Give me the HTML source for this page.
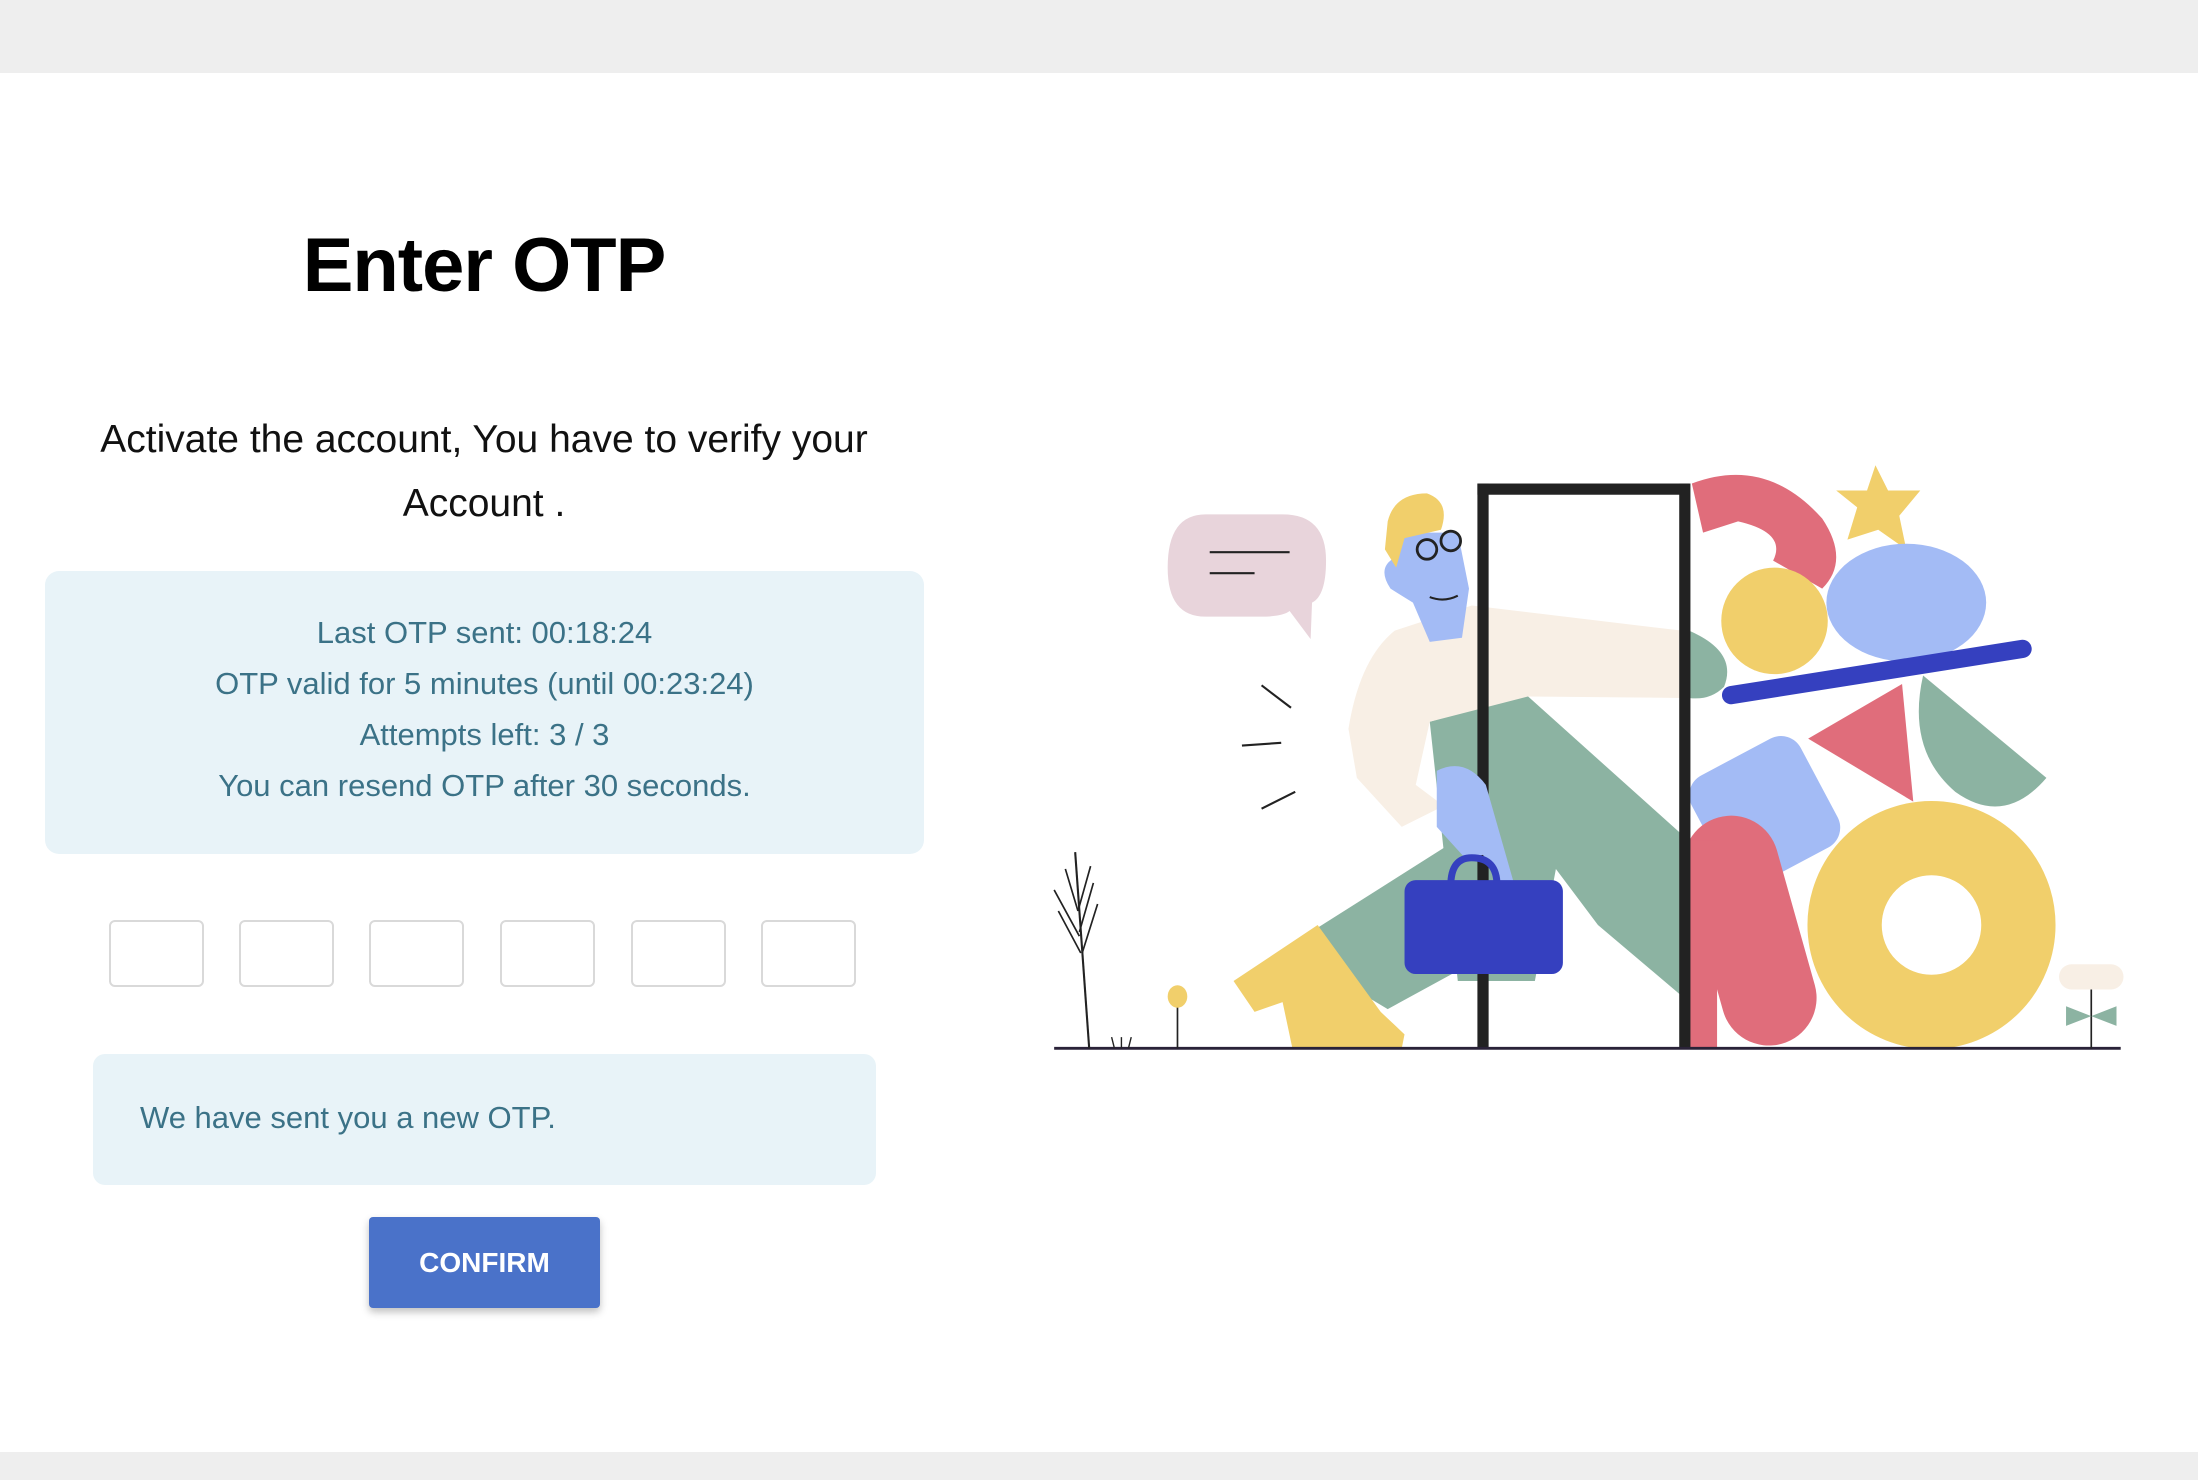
<!DOCTYPE html>
<html><head><meta charset="utf-8">
<style>
html,body{margin:0;padding:0;}
body{width:2198px;height:1480px;position:relative;background:#fff;font-family:"Liberation Sans",Roboto,sans-serif;overflow:hidden;}
.topbar{position:absolute;left:0;top:0;width:2198px;height:73px;background:#eeeeee;}
.botbar{position:absolute;left:0;top:1452px;width:2198px;height:28px;background:#eeeeee;}
h1{position:absolute;left:0;width:968px;top:222px;margin:0;text-align:center;font-size:76px;font-weight:bold;color:#000;letter-spacing:-1px;}
.para{position:absolute;left:60px;width:848px;top:408px;text-align:center;font-size:39px;line-height:64px;color:#111;}
.info{position:absolute;left:45px;top:571px;width:879px;height:283px;background:#e8f3f8;border-radius:14px;text-align:center;color:#3b7287;font-size:31px;}
.info div{position:absolute;left:0;width:100%;}
.otp{position:absolute;top:920px;width:95px;height:67px;border:2px solid #d9d9d9;border-radius:6px;box-sizing:border-box;}
.alert{position:absolute;left:93px;top:1054px;width:783px;height:131px;background:#e8f3f8;border-radius:12px;color:#3b7287;font-size:31px;}
.alert span{position:absolute;left:47px;top:46px;}
.btn{position:absolute;left:369px;top:1217px;width:231px;height:91px;background:#4a72c9;border-radius:4px;color:#fff;font-size:28px;font-weight:bold;text-align:center;line-height:91px;box-shadow:0 4px 8px rgba(0,0,0,0.25);}
svg{position:absolute;left:0;top:0;}
</style></head><body>
<div class="topbar"></div>
<div class="botbar"></div>
<h1>Enter OTP</h1>
<div class="para">Activate the account, You have to verify your Account .</div>
<div class="info">
<div style="top:44px">Last OTP sent: 00:18:24</div>
<div style="top:95px">OTP valid for 5 minutes (until 00:23:24)</div>
<div style="top:146px">Attempts left: 3 / 3</div>
<div style="top:197px">You can resend OTP after 30 seconds.</div>
</div>
<div class="otp" style="left:109px"></div>
<div class="otp" style="left:239px"></div>
<div class="otp" style="left:369px"></div>
<div class="otp" style="left:500px"></div>
<div class="otp" style="left:631px"></div>
<div class="otp" style="left:761px"></div>
<div class="alert"><span>We have sent you a new OTP.</span></div>
<div class="btn">CONFIRM</div>

<svg width="2198" height="1480" viewBox="0 0 1568 1056">
<path d="M860 367 H915 Q946 367 946 400 Q946 425 936 430 L935 456 L920 436 Q915 440 900 440 H860 Q833 440 833 405 Q833 367 860 367Z" fill="#e8d4db"/>
<line x1="863" y1="394" x2="920" y2="394" stroke="#222" stroke-width="1.5"/>
<line x1="863" y1="409" x2="895" y2="409" stroke="#222" stroke-width="1.5"/>
<line x1="900" y1="489" x2="921" y2="505" stroke="#222" stroke-width="1.5"/>
<line x1="886" y1="532" x2="914" y2="530" stroke="#222" stroke-width="1.5"/>
<line x1="900" y1="577" x2="924" y2="565" stroke="#222" stroke-width="1.5"/>
<path d="M1207 345 Q1260 325 1300 370 Q1320 400 1300 420 L1265 400 Q1275 380 1240 372 L1215 380Z" fill="#e06d7b"/>
<path d="M1338 332 L1347 350 L1370 350 L1355 368 L1360 392 L1340 378 L1318 385 L1325 362 L1310 350 L1332 350Z" fill="#f1cf6b"/>
<circle cx="1266" cy="443" r="38" fill="#f1cf6b"/>
<ellipse cx="1360" cy="430" rx="57" ry="42" fill="#a3bbf5"/>
<path d="M1372 482 L1460 555 Q1430 590 1395 565 Q1360 535 1372 482Z" fill="#8cb3a2"/>
<path d="M1290 527 L1357 488 L1365 572Z" fill="#e06d7b"/>
<rect x="1215" y="535" width="88" height="88" rx="16" fill="#a3bbf5" transform="rotate(-28 1259 579)"/>
<line x1="1235" y1="616" x2="1262" y2="712" stroke="#e06d7b" stroke-width="68" stroke-linecap="round"/>
<rect x="1205" y="600" width="20" height="148" fill="#e06d7b"/>
<circle cx="1378" cy="660" r="62" fill="none" stroke="#f1cf6b" stroke-width="53"/>
<path d="M1205 450 Q1240 465 1230 490 Q1220 500 1205 498Z" fill="#8cb3a2"/>
<line x1="1235" y1="496" x2="1443" y2="463" stroke="#3540bf" stroke-width="13" stroke-linecap="round"/>
<path d="M1020 515 L1088 495 L1205 600 L1205 715 L1140 660 L1110 620 L1095 700 L1040 700 Z" fill="#8cb3a2"/>
<path d="M940 662 L1030 605 L1045 690 L990 720 L965 705Z" fill="#8cb3a2"/>
<path d="M880 700 L940 660 L985 722 L1002 738 L1000 748 L922 748 L915 715 L895 722Z" fill="#f1cf6b"/>
<path d="M995 450 L1050 432 L1200 450 L1200 498 L1090 497 L1020 515 L1010 560 L1030 575 L1000 590 L968 555 L962 520 Q970 470 995 450Z" fill="#f8efe5"/>
<rect x="1054" y="345" width="151" height="8" fill="#222"/>
<rect x="1054" y="345" width="8" height="403" fill="#222"/>
<rect x="1198" y="345" width="8" height="403" fill="#222"/>
<path d="M1000 380 L1040 380 L1048 420 L1043 455 L1020 458 L1008 430 L992 420 Q982 405 995 398Z" fill="#a3bbf5"/>
<path d="M990 372 Q995 352 1018 352 Q1035 358 1028 378 L1002 384 L996 405 L988 392Z" fill="#f1cf6b"/>
<circle cx="1018" cy="392" r="7" fill="none" stroke="#222" stroke-width="2"/>
<circle cx="1035" cy="386" r="7" fill="none" stroke="#222" stroke-width="2"/>
<path d="M1020 426 Q1030 430 1040 425" stroke="#222" stroke-width="1.5" fill="none"/>
<path d="M1025 550 Q1045 540 1060 560 L1080 630 L1070 630 L1058 610 L1045 612 L1025 590Z" fill="#a3bbf5"/>
<path d="M1035 632 Q1035 612 1050 612 Q1068 612 1068 632" stroke="#3540bf" stroke-width="5" fill="none"/>
<rect x="1002" y="628" width="113" height="67" rx="8" fill="#3540bf"/>
<line x1="752" y1="748" x2="1513" y2="748" stroke="#2a2238" stroke-width="2"/>
<line x1="767" y1="608" x2="777" y2="748" stroke="#222" stroke-width="1.5"/>
<path d="M752 635 L770 668 M755 650 L771 680 M780 630 L770 665 M783 645 L772 680 M760 620 L769 650 M778 618 L769 650" stroke="#222" stroke-width="1.2" fill="none"/>
<line x1="840" y1="712" x2="840" y2="748" stroke="#222" stroke-width="1.2"/>
<ellipse cx="840" cy="711" rx="7" ry="8" fill="#f1cf6b"/>
<path d="M795 748 L793 740 M800 748 L800 740 M805 748 L807 740" stroke="#222"/>
<line x1="1492" y1="700" x2="1492" y2="748" stroke="#222" stroke-width="1.2"/>
<rect x="1469" y="688" width="46" height="18" rx="9" fill="#f8efe5"/>
<path d="M1492 725 L1474 718 L1474 732Z M1492 725 L1510 718 L1510 732Z" fill="#8cb3a2"/>
</svg>
</body></html>
